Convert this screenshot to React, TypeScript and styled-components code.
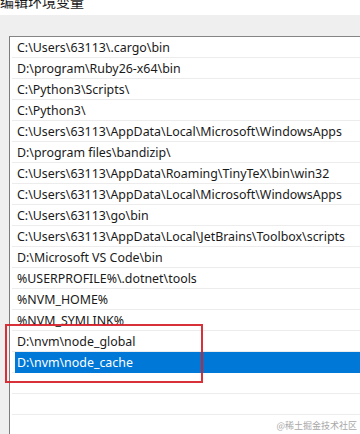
import styled, { createGlobalStyle } from "styled-components";

const GlobalStyle = createGlobalStyle`
  html, body {
    margin: 0;
    padding: 0;
    background: #efefef;
  }
  body {
    font-family: "Noto Sans", "Noto Sans CJK SC", sans-serif;
  }
`;

const PATHS = [
  "C:\\Users\\63113\\.cargo\\bin",
  "D:\\program\\Ruby26-x64\\bin",
  "C:\\Python3\\Scripts\\",
  "C:\\Python3\\",
  "C:\\Users\\63113\\AppData\\Local\\Microsoft\\WindowsApps",
  "D:\\program files\\bandizip\\",
  "C:\\Users\\63113\\AppData\\Roaming\\TinyTeX\\bin\\win32",
  "C:\\Users\\63113\\AppData\\Local\\Microsoft\\WindowsApps",
  "C:\\Users\\63113\\go\\bin",
  "C:\\Users\\63113\\AppData\\Local\\JetBrains\\Toolbox\\scripts",
  "D:\\Microsoft VS Code\\bin",
  "%USERPROFILE%\\.dotnet\\tools",
  "%NVM_HOME%",
  "%NVM_SYMLINK%",
  "D:\\nvm\\node_global",
  "D:\\nvm\\node_cache",
  "",
  "",
  "",
];

const SELECTED = 15;

const Window = styled.div`
  position: relative;
  width: 360px;
  height: 434px;
  overflow: hidden;
  background: #efefef;
`;

const TitleBar = styled.div`
  height: 15px;
  background: #ffffff;
  overflow: hidden;
`;

const TitleText = styled.div`
  margin-top: -8px;
  font-size: 14px;
  line-height: 18px;
  color: #1a1a1a;
  font-family: "Noto Sans CJK SC", sans-serif;
`;

const Body = styled.div`
  padding: 21px 0 0 9px;
`;

const ListBox = styled.div`
  border-left: 1px solid #7d7d7d;
  border-top: 1px solid #858585;
  background: #ffffff;
  height: 400px;
  display: flex;
  flex-direction: column;
`;

const Row = styled.div`
  height: 20px;
  margin-left: 2px;
  border-bottom: 1px solid #ececec;
  display: flex;
`;

const Cell = styled.div<{ $selected?: boolean }>`
  flex: 1;
  margin-left: 3px;
  margin-bottom: -1px;
  padding-left: 2px;
  font-size: 12.4px;
  line-height: 21px;
  white-space: nowrap;
  color: ${(p) => (p.$selected ? "#ffffff" : "#1a1a1a")};
  background: ${(p) => (p.$selected ? "#0078d7" : "transparent")};
`;

const Highlight = styled.div`
  position: absolute;
  left: 5px;
  top: 324px;
  width: 194px;
  height: 55px;
  border: 2px solid rgba(214, 32, 40, 0.92);
  pointer-events: none;
`;

const Watermark = styled.div`
  position: absolute;
  right: 3px;
  bottom: 2px;
  font-size: 9px;
  color: #a8a8a8;
  font-family: "Noto Sans CJK SC", sans-serif;
`;

export default function App() {
  return (
    <Window>
      <GlobalStyle />
      <TitleBar>
        <TitleText>编辑环境变量</TitleText>
      </TitleBar>
      <Body>
        <ListBox>
          {PATHS.map((path, i) => (
            <Row key={i}>
              <Cell $selected={i === SELECTED}>{path}</Cell>
            </Row>
          ))}
        </ListBox>
      </Body>
      <Highlight />
      <Watermark>@稀土掘金技术社区</Watermark>
    </Window>
  );
}
